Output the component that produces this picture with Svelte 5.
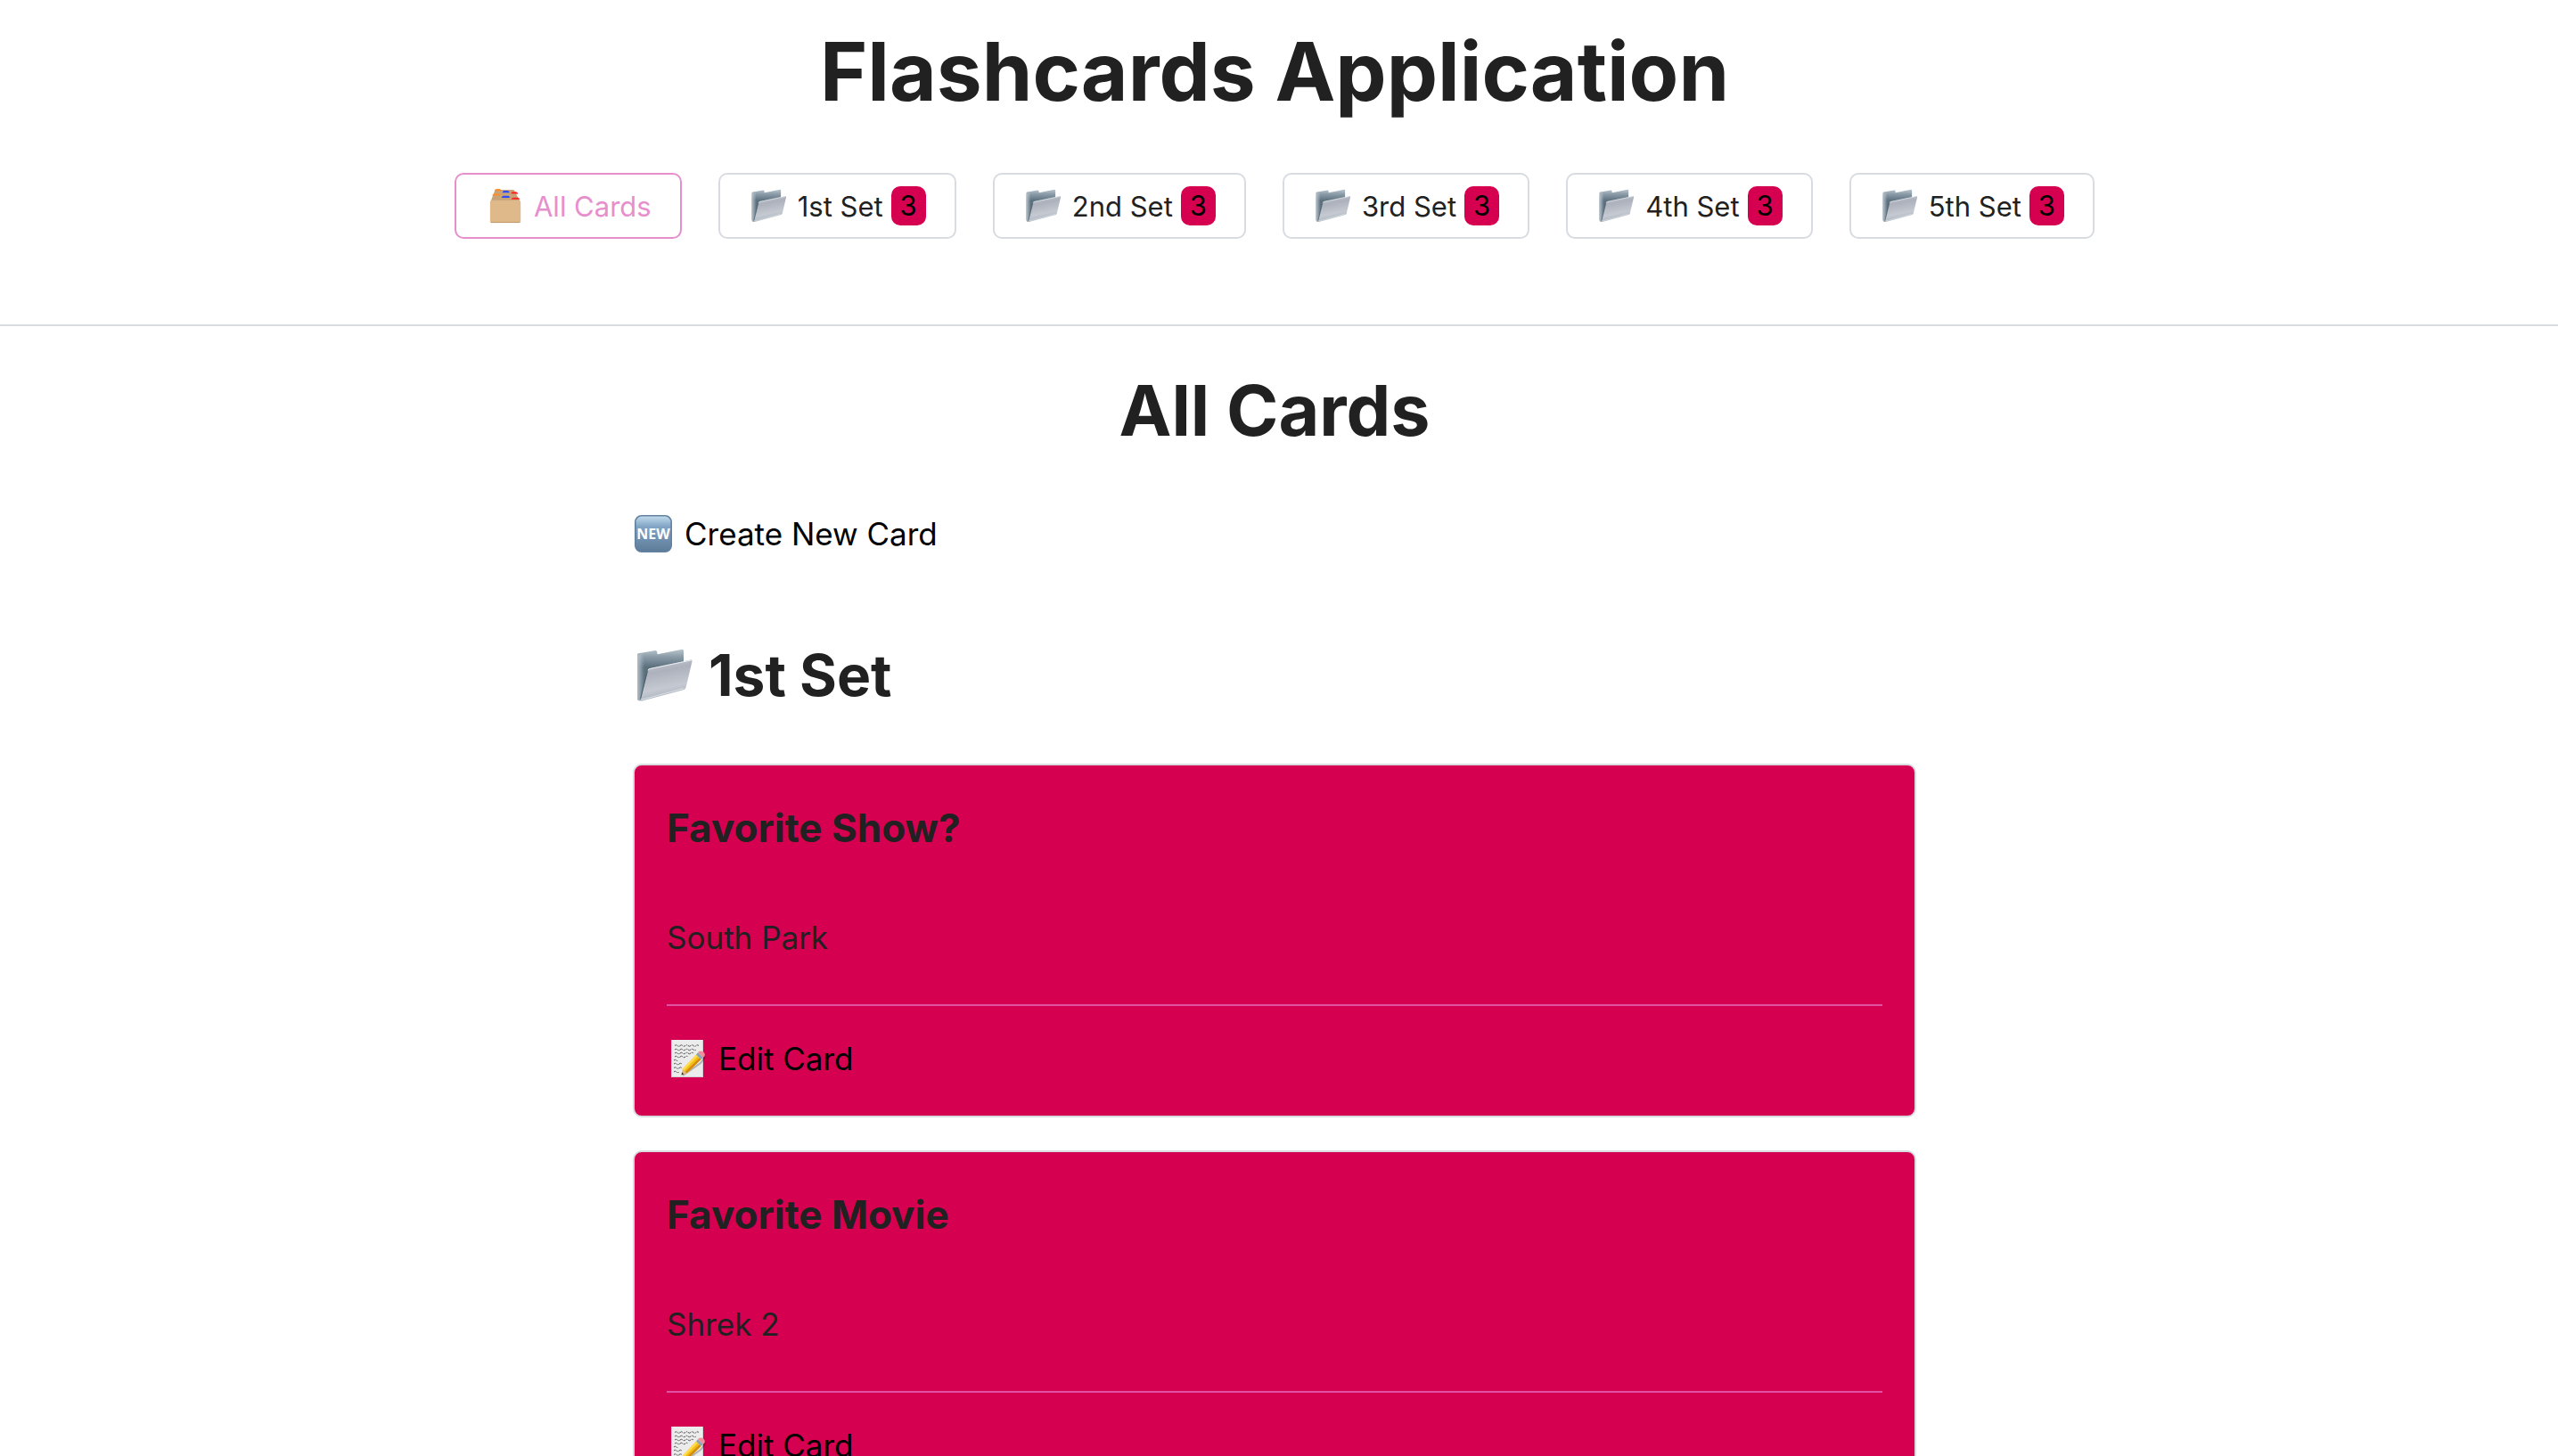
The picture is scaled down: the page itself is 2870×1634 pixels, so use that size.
<script>
  const sets = ['1st Set', '2nd Set', '3rd Set', '4th Set', '5th Set'].map((name) => ({ name, count: 3 }));
  const cards = [
    { question: 'Favorite Show?', answer: 'South Park' },
    { question: 'Favorite Movie', answer: 'Shrek 2' }
  ];
</script>

{#snippet folder(cls)}
  <svg class={cls} viewBox="0 0 64 60" aria-hidden="true">
    <defs>
      <linearGradient id="fb" x1="0" y1="0" x2="0" y2="1">
        <stop offset="0" stop-color="#b9c5cd" /><stop offset=".14" stop-color="#8c9da9" /><stop offset=".35" stop-color="#5b6f7d" /><stop offset="1" stop-color="#5f7381" />
      </linearGradient>
      <linearGradient id="fs" x1="0" y1="0" x2="1" y2="0">
        <stop offset="0" stop-color="#b4c0c9" /><stop offset="1" stop-color="#b4c0c9" stop-opacity="0" />
      </linearGradient>
      <linearGradient id="ff" x1="0" y1="0" x2=".25" y2="1">
        <stop offset="0" stop-color="#c9cdd5" /><stop offset=".35" stop-color="#adb1bc" /><stop offset=".75" stop-color="#c5c9d1" /><stop offset="1" stop-color="#a9b3bd" />
      </linearGradient>
    </defs>
    <path d="M1 7Q1 5.500 2.500 5.300L21 2Q23 1.600 23.200 3.500L23.600 6.200L51 .8Q53 .5 53 2.500V44L5 58Q1 59 1 55Z" fill="url(#fb)" />
    <path d="M1 7L9 5V55L5 58Q1 59 1 55Z" fill="url(#fs)" />
    <path d="M12.500 25Q13 22.500 15.500 22L60.500 12.600Q63 12.300 62.500 14.600L55.600 43.500Q55.200 45.400 53.300 46L5.800 58.800Q4.600 58.800 5 56.800Z" fill="url(#ff)" />
    <path d="M5.300 56Q5.800 57.600 8 56.800L53 44.600" fill="none" stroke="#e3e8ed" stroke-width=".8" />
    <path d="M13 24Q13.600 22.700 16 22.400L61.500 13" fill="none" stroke="#e9edf1" stroke-width="1" />
    <path d="M4.500 56.500L12.500 25" fill="none" stroke="#3f505c" stroke-width=".8" />
  </svg>
{/snippet}

<header>
  <h1>Flashcards Application</h1>
  <nav>
    <button class="tab active" type="button">
      <svg class="tab-icon" viewBox="0 0 38 42" aria-hidden="true">
        <path d="M2 15L7 2H29L36 15Z" fill="#c6a477" />
        <path d="M6 3.500Q7 1 9 1H12Q14 1 14 3.500Z" fill="#ff8b2b" />
        <path d="M15.500 5.500Q16 3.200 18 3.200H21.500Q23 3.200 24 5.500Z" fill="#2e49ff" />
        <path d="M25.500 6.500Q26 4.500 28 4.500H31.500Q33 4.500 34 7Z" fill="#ff2424" />
        <path d="M3.500 9Q4 6.800 6 6.800H11.500Q13.500 6.800 13.800 9Z" fill="#ff8b2b" />
        <path d="M14.500 11.500Q15 9.200 17 9.200H22Q24 9.200 24.300 11.500Z" fill="#2e49ff" />
        <path d="M26 13.500Q26.500 11.400 28.500 11.400H33.500Q35.500 11.400 36 13.500Z" fill="#ff2424" />
        <path d="M1 17Q1 14.500 3 14.500H35Q37 14.500 37 17V39Q37 41 35 41H3Q1 41 1 39Z" fill="#e0b98a" />
        <path d="M2 40.500H36" stroke="#bd9567" stroke-width="1" />
      </svg>
      <span>All Cards</span>
    </button>
    {#each sets as set}
      <button class="tab" type="button">
        {@render folder('tab-icon')}
        <span>{set.name}</span>
        <span class="badge">{set.count}</span>
      </button>
    {/each}
  </nav>
</header>

<main>
  <h2>All Cards</h2>
  <div class="content">
    <a class="action create" href="#new">
      <svg class="new-icon" viewBox="0 0 42 42" aria-hidden="true">
        <defs>
          <linearGradient id="nw" x1="0" y1="0" x2="0" y2="1">
            <stop offset="0" stop-color="#c3dcee" /><stop offset=".3" stop-color="#82a5c5" /><stop offset="1" stop-color="#5d7b99" />
          </linearGradient>
        </defs>
        <rect x=".8" y=".8" width="40.400" height="40.400" rx="7" fill="url(#nw)" stroke="#62819f" stroke-width="1.600" />
        <text x="21" y="27" text-anchor="middle">NEW</text>
      </svg>
      <span>Create New Card</span>
    </a>

    <section>
      <h3>{@render folder('folder-large')}<span>1st Set</span></h3>
      {#each cards as card}
        <article>
          <h4>{card.question}</h4>
          <p>{card.answer}</p>
          <hr />
          <a class="action" href="#edit">
            <svg class="edit-icon" viewBox="0 0 40 44" aria-hidden="true">
              <rect x="1" y="1" width="36" height="42" fill="#ececec" />
              <path d="M1.500 1V43M36.500 1V43M1 42.500H37" stroke="#cfcfcf" stroke-width="1" />
              <g fill="none" stroke="#555" stroke-width="1" stroke-dasharray="3 .7 1.500 .6 4 1">
                <path d="M5 7.500q1.500-1.500 3 0t3 0t3 0t3 0t3 0t3 0t3 0t3 0t3 0" />
                <path d="M5 12q1.500-1.500 3 0t3 0t3 0t3 0t3 0t3 0t3 0t3 0" />
                <path d="M5 16q1.500-1.500 3 0t3 0t3 0t3 0t3 0t3 0t3 0" />
                <path d="M5 20q1.500-1.500 3 0t3 0t3 0t3 0t3 0" />
                <path d="M4 24q1.500-1.500 3 0t1 0" />
                <path d="M4 28q1.500-1.500 3 0t3 0t3 0" />
                <path d="M4 32.500q1.500-1.500 3 0t3 0t3 0" />
                <path d="M4 37q1.500-1.500 3 0t3 0" />
              </g>
              <path d="M14 41L34 27L37 23L39 19" fill="none" stroke="#000" stroke-opacity=".25" stroke-width="2" />
              <path d="M12.500 40.500L14 33.500L18.500 38.200Z" fill="#e3b878" />
              <path d="M12.500 40.500L13.200 37.300L15.300 39.400Z" fill="#333" />
              <path d="M14 33.500L29 17.500L34.500 23L18.500 38.500Z" fill="#f6bd16" />
              <path d="M14 33.500L29 17.500L30.800 19.300L15.600 35.200Z" fill="#ffdd50" />
              <path d="M32.800 21.300L34.500 23L18.500 38.500L16.800 36.800Z" fill="#d18c0c" />
              <path d="M29 17.500L31 15.200L37 20.700L34.500 23Z" fill="#8ba3b5" />
              <path d="M31 15.200L32 14Q35 12.500 37.500 14.800Q39.800 17 38.500 19.500L37 20.700Z" fill="#ee8e9b" />
            </svg>
            <span>Edit Card</span>
          </a>
        </article>
      {/each}
    </section>
  </div>
</main>

<style>
  :global(body) {
    background: #fff;
    color: #212121;
    font-family: Inter, "Liberation Sans", sans-serif;
    font-size: 35px;
    line-height: 54px;
  }
  :global(#app) {
    height: 100vh;
    overflow-y: auto;
    scrollbar-width: none;
  }
  h1, h2, h3, h4, p {
    margin: 0;
    font-weight: 700;
  }
  header {
    padding: 22px 10px 96px 0;
    border-bottom: 2px solid #d8dbe0;
  }
  h1 {
    font-size: 91px;
    line-height: 116px;
    text-align: center;
  }
  nav {
    display: flex;
    flex-wrap: wrap;
    justify-content: center;
    gap: 41px;
    margin-top: 56px;
  }
  .tab {
    display: flex;
    align-items: center;
    height: 74px;
    padding: 0 32px 0 35px;
    border: 2px solid #d8dbe0;
    border-radius: 10px;
    background: #fff;
    color: #212121;
    font-family: inherit;
    font-size: 31px;
  }
  .tab.active {
    border-color: #e78fcd;
    color: #e78fcd;
  }
  .tab-icon {
    width: 40px;
    height: 40px;
    margin-right: 12px;
  }
  .badge {
    margin-left: 9px;
    padding: 0 10px;
    border-radius: 10px;
    background: #d60050;
    color: #000;
    line-height: 44px;
  }
  main {
    padding: 38px 10px 0 0;
  }
  h2 {
    font-size: 79px;
    line-height: 112px;
    text-align: center;
  }
  .content {
    max-width: 1440px;
    margin: 0 auto;
  }
  .action {
    display: flex;
    align-items: center;
    gap: 14px;
    color: #000;
    text-decoration: none;
  }
  .create {
    margin-top: 56px;
    padding-left: 2px;
  }
  .new-icon {
    width: 42px;
    height: 42px;
  }
  .new-icon text {
    font: 700 16px "Open Sans", sans-serif;
    fill: #fff;
  }
  h3 {
    display: flex;
    align-items: center;
    gap: 17px;
    margin: 90px 0 57px;
    padding-left: 4px;
    font-size: 64px;
    line-height: 84px;
  }
  .folder-large {
    width: 64px;
    height: 60px;
  }
  article {
    margin-bottom: 37px;
    padding: 36px 36px 37px;
    border: 2px solid #d8dbe0;
    border-radius: 10px;
    background: #d60050;
  }
  h4 {
    font-size: 44px;
    line-height: 68px;
  }
  p {
    margin-top: 62px;
    font-weight: 400;
  }
  hr {
    height: 2px;
    margin: 48px 0 32px;
    border: 0;
    background: #e252a4;
  }
  .edit-icon {
    width: 40px;
    height: 44px;
    margin-left: 4px;
  }
</style>
